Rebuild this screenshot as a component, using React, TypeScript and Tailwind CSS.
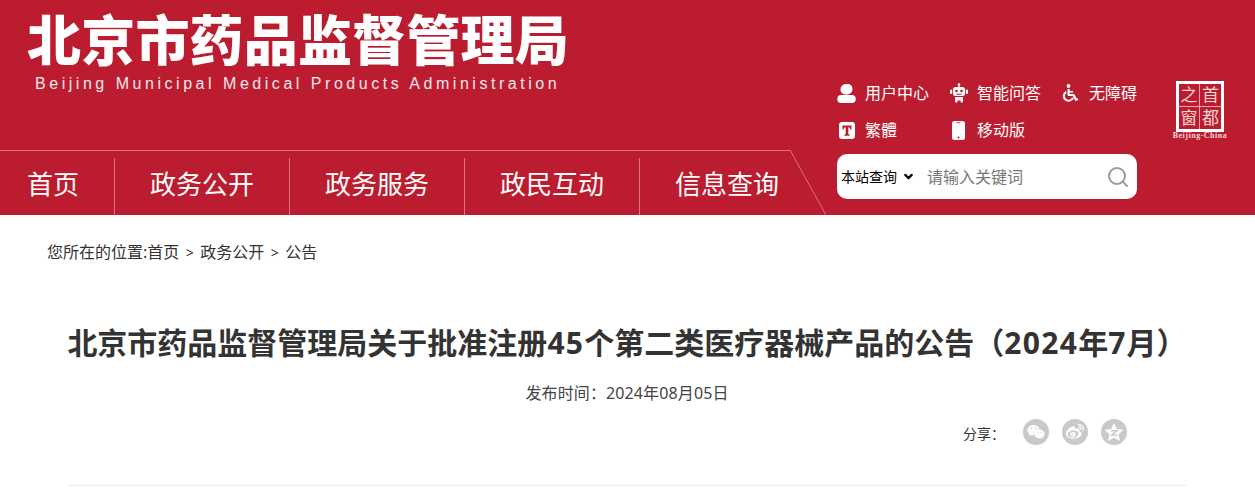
import React from "react";
import { FaWeixin, FaWeibo } from "react-icons/fa";
import { ChevronDown, Search } from "lucide-react";

const UserIcon = () => (
  <svg width="19" height="19" viewBox="0 0 19 19" fill="white">
    <path d="M3.500 5.500C3.500 2 6 0 10 0c3.500 0 5.500 2 5.500 5 0 3.200-2.500 5.500-6 5.500C6 10.500 3.500 8.700 3.500 5.500z" />
    <rect x="0.300" y="11" width="18.400" height="8" rx="3.800" />
  </svg>
);
const RobotIcon = () => (
  <svg width="18" height="20" viewBox="0 0 18 20" fill="white">
    <circle cx="9" cy="1.500" r="1.300" />
    <rect x="8.300" y="2" width="1.400" height="2.500" />
    <path d="M5.500 4h7A2.500 2.500 0 0 1 15 6.500v4a2.500 2.500 0 0 1-2.500 2.500h-7A2.500 2.500 0 0 1 3 10.500v-4A2.500 2.500 0 0 1 5.500 4z" />
    <rect x="0" y="6.500" width="2.200" height="4.500" rx="1" />
    <rect x="15.800" y="6.500" width="2.200" height="4.500" rx="1" />
    <circle cx="6.500" cy="8" r="1.300" fill="#bc1c2f" />
    <circle cx="11.500" cy="8" r="1.300" fill="#bc1c2f" />
    <rect x="6.500" y="10.700" width="5" height="1" fill="#bc1c2f" />
    <path d="M5 14h8v4.500a1 1 0 0 1-1 1h-1.300v-2H7.300v2H6a1 1 0 0 1-1-1z" />
  </svg>
);
const WheelchairIcon = () => (
  <svg width="17" height="18" viewBox="0 0 17 18">
    <circle cx="6.500" cy="2" r="1.900" fill="white" />
    <path d="M6.600 5v6h5l2.300 4.800 2-.8" fill="none" stroke="white" strokeWidth="2.200" strokeLinejoin="round" />
    <path d="M4.300 7.900a4.700 4.700 0 1 0 6.600 5.900" fill="none" stroke="white" strokeWidth="2" />
    <rect x="6.500" y="7" width="4.500" height="1.500" fill="white" />
  </svg>
);
const TIcon = () => (
  <svg width="16" height="17" viewBox="0 0 16 17">
    <rect x="0" y="0" width="16" height="17" rx="3" fill="white" />
    <path d="M3.500 3.500h9v4h-1.200c-.2-1.400-.6-2.300-2-2.300v6.900l1.200.5v1.200h-5v-1.200l1.200-.5V5.200c-1.400 0-1.800.9-2 2.300H3.500z" fill="#bc1c2f" />
  </svg>
);
const MobileIcon = () => (
  <svg width="13" height="19" viewBox="0 0 13 19">
    <rect x="0" y="0" width="13" height="19" rx="2.500" fill="white" />
    <circle cx="6.500" cy="16.500" r="1" fill="#bc1c2f" />
    <rect x="4.500" y="1.400" width="4" height="0.800" fill="#bc1c2f" />
  </svg>
);
const ZoneIcon = () => (
  <svg width="20" height="20" viewBox="0 0 18 18">
    <path d="M9 .8l2.600 5.400 5.900.8-4.300 4.100 1.100 5.900L9 14.200 3.700 17l1.100-5.900L.5 7l5.900-.8z" fill="white" />
    <path d="M6.300 7.800h5.400L7 11.800h5" fill="none" stroke="#c9c9c9" strokeWidth="1.300" />
  </svg>
);

const navItems = ["政务公开", "政务服务", "政民互动", "信息查询"];

function LinkItem({ icon, label, w }: { icon: React.ReactNode; label: string; w: string }) {
  return (
    <div className={`flex items-center ${w}`}>
      <span className="flex w-[19px] justify-center">{icon}</span>
      <span className="ml-[9px] text-[16px] leading-[20px] text-white">{label}</span>
    </div>
  );
}

export default function App() {
  return (
    <div className="h-[498px] w-[1255px] overflow-hidden bg-white font-['Noto_Sans','Noto_Sans_CJK_SC',sans-serif] text-[#333]">
      <header className="flex h-[215px] bg-[#bc1c2f]">
        <div className="flex w-[837px] flex-col">
          <div className="h-[150px] pl-[27px] pt-[10px]">
            <div className="whitespace-nowrap text-[54px] font-black leading-[60px] tracking-[0.2px] text-white">北京市药品监督管理局</div>
            <div className="ml-[8px] mt-[4px] whitespace-nowrap font-['Liberation_Sans',sans-serif] text-[16px] leading-[20px] tracking-[3.53px] text-[#f8e8ea]">
              Beijing Municipal Medical Products Administration
            </div>
          </div>
          <nav className="relative flex h-[65px] w-[826px] text-[26px] leading-[65px] text-white">
            <div className="absolute left-0 top-0 h-px w-[790px] bg-[#d5767f]" />
            <svg className="absolute left-[789px] top-0" width="38" height="65" viewBox="0 0 38 65">
              <line x1="1" y1="0" x2="37" y2="65" stroke="#d5767f" strokeWidth="1" />
            </svg>
            <div className="relative w-[114px] pl-[27px] pt-[2px]">首页</div>
            {navItems.map((n) => (
              <div key={n} className="flex w-[175px] items-stretch pt-[8px]">
                <span className="w-px bg-[#d5767f]" />
                <span className="-mt-[6px] flex-1 pl-[35px]">{n}</span>
              </div>
            ))}
          </nav>
        </div>
        <div className="relative w-[418px] pt-[81px]">
          <div className="flex">
            <div className="w-[300px]">
              <div className="flex h-[24px] items-center">
                <LinkItem w="w-[112px]" icon={<UserIcon />} label="用户中心" />
                <LinkItem w="w-[112px]" icon={<RobotIcon />} label="智能问答" />
                <LinkItem w="w-[76px]" icon={<WheelchairIcon />} label="无障碍" />
              </div>
              <div className="mt-[13px] flex h-[24px] items-center">
                <LinkItem w="w-[112px]" icon={<TIcon />} label="繁體" />
                <LinkItem w="w-[112px]" icon={<MobileIcon />} label="移动版" />
              </div>
            </div>
            <div className="ml-[35px] flex w-[56px] flex-col items-center">
              <div className="grid h-[51px] w-[48px] grid-cols-2 grid-rows-2 border-[3px] border-white bg-[#bc1c2f] text-[17px] leading-[22px] text-[#f3d5d8]">
                <span className="border-b border-r border-[#e9aab0] text-center">之</span>
                <span className="border-b border-[#e9aab0] text-center">首</span>
                <span className="border-r border-[#e9aab0] text-center">窗</span>
                <span className="text-center">都</span>
              </div>
              <div className="mt-[-1px] whitespace-nowrap font-['Liberation_Serif',serif] text-[8px] font-bold leading-[10px] tracking-[0.5px] text-[#f3d5d8]">
                Beijing-China
              </div>
            </div>
          </div>
          <div className="absolute left-0 top-[154px] flex h-[45px] w-[300px] items-center rounded-[10px] bg-white">
            <span className="ml-[4px] text-[14px] leading-[20px] text-black">本站查询</span>
            <ChevronDown size={13} strokeWidth={4} className="ml-[5px] text-black" />
            <span className="ml-[12px] text-[16px] leading-[20px] text-[#777]">请输入关键词</span>
            <Search size={24} strokeWidth={2} className="ml-auto mr-[7px] text-[#999]" />
          </div>
        </div>
      </header>
      <main className="relative">
        <div className="pl-[47px] pt-[27px] text-[16px] leading-[20px] text-[#333]">
          您所在的位置:首页<span className="mx-[6.500px] text-[14px]">&gt;</span>政务公开<span className="mx-[6.500px] text-[14px]">&gt;</span>公告
        </div>
        <h1 className="mt-[58px] whitespace-nowrap pr-[1px] text-center text-[30px] font-bold leading-[44px] text-[#333]">
          北京市药品监督管理局关于批准注册<span className="tracking-[1.3px]">45</span>个第二类医疗器械产品的公告（<span className="tracking-[1.3px]">2024</span>年<span className="tracking-[1.3px]">7</span>月）
        </h1>
        <div className="mt-[16px] pr-[1px] text-center text-[16px] leading-[24px] tracking-[0.12px] text-[#444]">发布时间：2024年08月05日</div>
        <div className="mt-[14px] flex items-center pl-[963px]">
          <span className="w-[60px] pt-[4px] text-[14px] leading-[20px] text-[#333]">分享：</span>
          <div className="flex gap-[13px]">
            <span className="flex h-[26px] w-[26px] items-center justify-center rounded-full bg-[#c9c9c9]"><FaWeixin size={18} color="white" /></span>
            <span className="flex h-[26px] w-[26px] items-center justify-center rounded-full bg-[#c9c9c9]"><FaWeibo size={18} color="white" /></span>
            <span className="flex h-[26px] w-[26px] items-center justify-center rounded-full bg-[#c9c9c9]"><ZoneIcon /></span>
          </div>
        </div>
        <div className="ml-[68px] mt-[40px] h-px w-[1119px] bg-[#eeeeee]" />
      </main>
    </div>
  );
}
